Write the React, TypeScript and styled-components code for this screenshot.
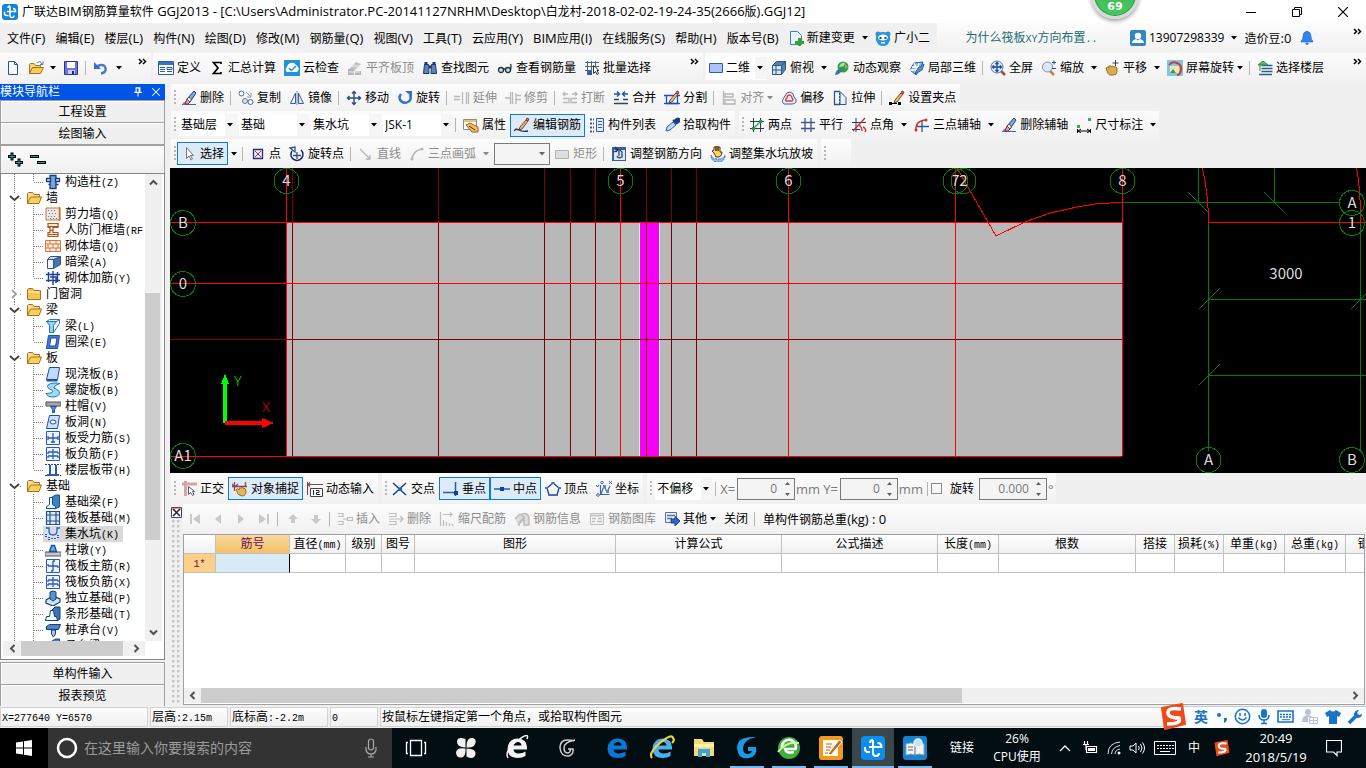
import React, { ReactNode } from 'react';
import styled, { createGlobalStyle, css } from 'styled-components';

const uiFont = '"Open Sans", "Noto Sans CJK SC", sans-serif';

const GlobalStyle = createGlobalStyle`
  *, *::before, *::after { box-sizing: border-box; }
  html, body { margin: 0; height: 100%; }
  body { font: 12px/16px ${uiFont}; color: #000; background: #f0f0f0; overflow: hidden; }
  button, input, select { font: inherit; color: inherit; margin: 0; padding: 0; border: 0; background: none; border-radius: 0; }
  svg { display: block; flex: none; }
`;

/* ---------- icons ---------- */

const S = ({ d, c = '#000', w = 1, f = 'none' }: { d: string; c?: string; w?: number; f?: string }) => (
  <path d={d} stroke={c} strokeWidth={w} fill={f} />
);

const eraser = (
  <>
    <S d="M1 14.5h14" c="#3d6c9c" />
    <S d="M2 14q3-1 5-3" c="#5b8dc0" w={2} />
    <S d="M6 9l3 3-2 2H4z" c="#7b2d3c" f="#e8a0a8" />
    <S d="M6 9l7-8 2 2-6 9z" c="#1f3f78" f="#7fa8df" />
    <S d="M6 9l3 3 1.500-2-2.500-3z" c="#553" f="#f5f5f5" />
  </>
);
const pencil = (
  <>
    <S d="M6 10l6-7 2 1-6 8-3 1z" c="#6b4a22" f="#e9bd7c" />
    <S d="M12 3l1-2 2 1-1 2z" c="#a33" f="#d66" />
  </>
);
const folder = (
  <>
    <S d="M1.500 13.500v-10l1-1h4l1.500 2h5.500v3" c="#a3741c" f="#f9dc85" />
    <S d="M1.500 13.500l3-6.500h11l-2.500 6.500z" c="#a3741c" f="#fbd05f" />
  </>
);
const blueBox = <path d="M1.500 1.500h13v13h-13z" fill="#eef5ff" stroke="#2a5bb8" />;
const bigE = (c: string) => (
  <path d="M23 14.500H9.500q.5 4 5 4 4 0 7-2v4.500q-3 2-8 2Q4 23 3.500 14 4 4 13.500 3.500 23 4 23 12zM9.500 10.500h8q-.3-3.500-3.800-3.500T9.500 10.500z" fill={c} fillRule="evenodd" />
);

const glyphs: Record<string, ReactNode> = {
  app: (<><rect width="16" height="16" rx="3" fill="#1585d8" /><S d="M8 2v9.500q0 2 2 2t2-2M2.500 7.500v2q0 2 2 2h2M5 7.500h8.500q0-3-2.500-3M8 2q-2 0-2 2" c="#fff" w={1.500} /></>),
  newFile: <S d="M3.500 1.500h6l3 3v10h-9z M9.500 1.500v3h3" c="#35507c" f="#f5f9ff" />,
  open: (<><S d="M1.500 13.500v-9l1-1h3.500l1.500 2h5v2" c="#a3741c" f="#f6d47a" /><S d="M1.500 13.500l3-6h11l-3 6z" c="#a3741c" f="#f9cd57" /><S d="M9 3q3-3 5 1M15 1.500v3h-3" c="#5d7896" /></>),
  save: (<><S d="M1.500 1.500h13v13h-13z" c="#2c2f9e" f="#6f74da" /><path d="M4 2h8v6H4z" fill="#fff" /><path d="M5 10h7v4H5z" fill="#c9ccf3" /><path d="M9 11h2v3H9z" fill="#22256e" /></>),
  undoFull: (<><S d="M8 13.500q5.500-1 4.500-5.500t-8-2" c="#4a79cf" w={2.500} /><path d="M1 2v7h7z" fill="#3c6cc4" /></>),
  define: (<><S d="M.5 1.500h15v13H.5z" c="#2f5cb0" f="#fff" /><path d="M1 2h14v3H1z" fill="#3e6ec7" /><S d="M2 7.500h5M2 9.500h5M2 11.500h5M9 7.500h5v2H9zM9 11.500h5" c="#2f5cb0" /></>),
  sigma: <S d="M12 4V2.500H4.500L9 8l-4.500 5.500H12V12" w={1.700} />,
  cloudCheck: (<><rect width="16" height="16" fill="#2293d8" /><path d="M3 12a3 3 0 0 1 0-5 5 5 0 0 1 9-2 4 4 0 0 1 1 7z" fill="#fff" /><S d="M5 8l2.500 2.500L12 6" c="#2293d8" w={1.500} /></>),
  levelTop: (<><path d="M2 9l7-7 5 2-7 7z" fill="#c4c4c4" /><path d="M1 9h6v6H1z M8 11h6v4H8z" fill="#b5b5b5" /><S d="M4 6h10M2 12h11" c="#eee" /></>),
  find: (<><S d="M2.500 4.500h4l.5 9H1.500z M9.500 4.500h4l1 9H9z" c="#1c3766" f="#5d83bd" /><S d="M4 2v3M12 2v3M7 7h2" c="#1c3766" w={3} /></>),
  glasses: (<><circle cx="4" cy="10" r="2.500" fill="#cfe0f5" stroke="#233" strokeWidth="1.300" /><circle cx="11" cy="10" r="2.500" fill="#cfe0f5" stroke="#233" strokeWidth="1.300" /><S d="M6.500 9h2M13.500 10q1-4 0-6" c="#233" w={1.300} /></>),
  batch: (<><S d="M1 2.500h14M1 6.500h14M3.500 1v14M7.500 1v9M11.500 1v6M1 10.500h7" c="#50648a" /><path d="M4 11h4v4H4z" fill="#2f5cb0" /><S d="M9.500 5.500v8l2-2 1.500 3 1.500-1-1.500-3h2z" c="#333" f="#fff" /></>),
  plan: <S d="M1.500 3.500h13v9h-13z" c="#2f5cb0" f="#a9c4f5" />,
  cube: (<><S d="M1.500 5.500l4-4h9v8l-4 5h-9z" c="#31567f" f="#4f81b3" /><path d="M2 6h8v8H2z" fill="#d6e6f5" /><S d="M1.500 5.500h9v9M10.500 5.500l4-4M5 6v8M2 10h8" c="#31567f" /></>),
  orbit: (<><circle cx="9" cy="7" r="5.500" fill="#2f9e4b" /><path d="M5 7q2-5 6-4 0 4-6 4z" fill="#a6e5a5" /><path d="M1 15q1-6 5-6 3 1 0 4-2 2-5 2z" fill="#3a72b8" /><path d="M11 4l3 3-3 2z" fill="#c94" /></>),
  local3d: (<><S d="M1 10l4-7 9-1-3 7-4 6z" c="#2a5f9b" f="#8fb7dc" /><S d="M5 3l3 7M10 3l-2 7M1 10h8M3 7l8 1" c="#fff" w={1.300} /><S d="M6 14l3-6 6-4-2 6z" c="#2a5f9b" f="#5d93c7" /></>),
  fullView: (<><S d="M11 11l4 4" c="#8c5a3c" w={2.500} /><circle cx="7" cy="7" r="6" fill="#dbe9fa" stroke="#5f7899" /><S d="M7 2.500v9M2.500 7h9M5.500 4L7 2.500 8.500 4M5.500 10L7 11.500 8.500 10M4 5.500L2.500 7 4 8.500M10 5.500L11.500 7 10 8.500" c="#1c4a96" w={1.300} /></>),
  zoomer: (<><S d="M9 11l4 4" c="#b98748" w={2.500} /><circle cx="6.500" cy="7" r="5" fill="#dbe9fa" stroke="#7e93ab" /><S d="M11 2.500h4M13 .5v4M11 8.500h4" c="#2a4f88" /></>),
  pan: (<><path d="M2 8q2-2 3 0V6q2-1 2 1 2-2 3 0 2-1 3 1v4q0 3-4 3H6q-2 0-4-7z" fill="#dcab55" stroke="#9a7022" /><S d="M11.500 0v6M8.500 3h6" c="#345" /></>),
  screenRotate: (<><rect width="16" height="16" fill="#7cc9e8" /><rect x="3" y="6" width="9" height="7" fill="#f6e7a8" /><path d="M3 13l3-4 3 4z" fill="#3c9b49" /><S d="M2 5q3-4 8-2t4 7-4 5" c="#d63a35" w={2} /></>),
  floors: (<><S d="M4.500 5.500h11M4.500 8.500h11M4.500 11.500h11M2 14.500h13" c="#2a5e91" w={1.500} /><S d="M1 5l5-4 5 4zM3 5v6" c="#2b8a4a" f="#69b870" /></>),
  erase: eraser,
  copy: (<><circle cx="3.500" cy="3.500" r="2.500" fill="#fff" stroke="#4c6b90" /><circle cx="7" cy="11" r="2.500" fill="#dde" stroke="#667c96" /><circle cx="12.500" cy="12" r="2.500" fill="#fff" stroke="#4c6b90" /><S d="M8 2l5 5M13 3v4H9" c="#8a99ac" /></>),
  mirror: (<><S d="M1.500 13.500L6.500 3v10.500z" c="#3c5f93" /><S d="M14.500 13.500L9.500 3v10.500z" c="#3c5f93" f="#dfe8f5" /><S d="M8 1v14" c="#88a" /></>),
  move: <S d="M8 1.500v13M1.500 8h13M6 3.500l2-2 2 2M6 12.500l2 2 2-2M3.500 6l-2 2 2 2M12.500 6l2 2-2 2" c="#2b4c80" w={1.400} />,
  rotate: (<><S d="M4 4q-3 4 0 7t7 1 2-7" c="#3d6fcd" w={2.500} /><path d="M8 1h7v6z" fill="#3d6fcd" /></>),
  extend: <S d="M0 6.500h6M0 9.500h6M8.500 2v12M12.500 2v12M14.500 2v12" c="#b9b9b9" w={1.300} />,
  trim: <S d="M0 8h5M5.500 2v12M7.500 2v12M11 5.500h5M11 9.500h5M11 3v11" c="#b9b9b9" w={1.300} />,
  breakIt: <S d="M1 4h5M10 4h5M3 2L1 4l2 2M13 2l2 2-2 2M1 8.500h6v4H1M15 8.500H9v4h6" c="#b9b9b9" w={1.300} />,
  join: (<><S d="M1 4h5M15 4h-5M4 1.500L6.500 4 4 6.500M12 1.500L9.500 4 12 6.500" c="#2655a8" w={1.500} /><S d="M1 9.500h5M10 9.500h5M1 13.500h14" c="#345" w={1.500} /></>),
  split: (<><S d="M0 5.500h16M2.500 5.500v8h11v-8" c="#1f46d6" w={1.300} />{pencil}<S d="M0 13.500h16" c="#1f46d6" w={1.300} /></>),
  align: <S d="M2.500 1v14M4 4h8v3H4zM4 10h10v4H4z" c="#b5b5b5" w={1.300} />,
  offset: (<><S d="M3 14q-3-2-1-5 1-1 2-3 1-4 5-4 4 1 4 5 3 3 2 5-1 2-4 2z" c="#3f5f86" f="#e8eef6" /><S d="M5 11q-1-2 1-3 0-3 3-3 2 1 2 3 2 2 0 3z" c="#d23c3c" w={1.300} /></>),
  stretch: (<><S d="M8 1.500H2.500v13H8" c="#2d568d" w={1.300} /><S d="M8 1.500l6 6v7H8z" c="#2d568d" f="#e6effa" /><path d="M7.500 3v11" stroke="#2d568d" strokeDasharray="2 1" /></>),
  grip: (<>{pencil}<path d="M0 12h3v3H0zM9 12h3v3H9z" /><S d="M2 13.500h6" /></>),
  property: (<><S d="M.5 2.500h13v10H.5z" c="#7a8ca5" f="#fff" /><path d="M1 3h12v2H1z" fill="#f0c36a" /><path d="M3 8l4-2 8 4v5H9z" fill="#f7b955" stroke="#9a6a1c" /><S d="M6 9l6 4" c="#333" /></>),
  editBar: (<>{pencil}<S d="M0 14q2-3 5-1t9 1" c="#1d2f55" w={1.300} /></>),
  list: (<><path d="M1 2.500h4M1 6.500h4M1 10.500h4M1 14.500h4" stroke="#3a5f95" strokeWidth="2" strokeDasharray="2 1" /><S d="M7.500 1.500h7v13h-7z" c="#3a5f95" f="#dfeafa" /><S d="M9 4.500h4M9 7.500h4M9 10.500h4" c="#3a5f95" /></>),
  picker: (<><S d="M2 14l1-4 6-5 3 3-6 5z" c="#2768a8" f="#b5dcf8" /><S d="M9 3l4 4M10 5q3-5 5-3t-2 4" c="#1b3d86" w={2} f="#1b3d86" /></>),
  twoPoint: (<><S d="M4.500 1v14M11.500 1v14M1 4.500h14M1 11.500h14" c="#233c66" /><S d="M3 13L13 3" c="#2f9a3c" w={1.300} /><path d="M10 3h3v3h-3zM3 10h3v3H3z" fill="#2f9a3c" /></>),
  parallel: <S d="M5 1v14M11 1v14M1 5.500h14M1 11.500h14" c="#41588b" w={1.300} />,
  pointAngle: (<><S d="M5 1v14M1 5.500h14M1 12.500h8" c="#233c66" /><S d="M2 14L14 1M8 8q3 2 3 6M12 10q4 2 2 5" c="#d0332e" w={1.400} /></>),
  threeAxis: (<><S d="M8 3v12M3 9.500h12" c="#2d568d" w={1.300} /><S d="M2 14q-1-10 9-11" c="#d0332e" w={1.500} /><circle cx="12" cy="3" r="1.500" fill="#d0332e" /><circle cx="2" cy="13" r="1.500" fill="#d0332e" /></>),
  dimension: (<><path d="M1 8h3v3H1zM12 1h3v3h-3z" fill="#43a852" /><S d="M1.500 12v4M14.500 12v4M2 14h12M5 12l-3 2 3 2M11 12l3 2-3 2" w={1} /></>),
  cursor: <S d="M5.500 1.500v11l2.500-2.500 2 4 1.500-1-2-3.500h3z" c="#777" f="#fff" />,
  point: (<><S d="M3.500 3.500h9v9h-9z" c="#1f2f86" f="#eef" w={1.300} /><S d="M5 5l6 6M11 5l-6 6" c="#c22c2c" /></>),
  rotatePoint: (<><S d="M3 5a6 6 0 1 0 9-1" c="#1c2b55" w={1.500} /><S d="M1 2l5-1v5zM4 9.500h8M8 6v7" c="#2a4f94" w={1.300} /></>),
  line: (<><S d="M2 3l10 10" c="#b5b5b5" w={1.300} /><S d="M12 9v4H8" c="#b5b5b5" w={1.300} /></>),
  arc: (<><S d="M3 14q0-9 10-11" c="#b5b5b5" w={1.500} /><circle cx="13" cy="3" r="1.500" fill="#b5b5b5" /><circle cx="3" cy="13" r="1.500" fill="#b5b5b5" /></>),
  rect: <S d="M1.500 4.500h13v8h-13z" c="#b0b0b0" f="#ddd" />,
  adjustDir: (<><path d="M1 1h14v14H1z" fill="#3c5f9b" /><path d="M3 4h11v10H3z" fill="#dce8f8" /><S d="M5 6q3-4 6 0v5q-4 2-5-1M8 5v5M4 1l3 3-4 2" c="#1c3565" w={1.200} /></>),
  slope: (<><path d="M4 7l-2-2 2-1V1h2v4V0h2v5V1h2v5h2q0 4-3 5H6z" fill="#ffd75c" stroke="#4a3b14" /><path d="M1 9q1 4 7 4t7-4q0 7-7 7T1 9z" fill="#8cbbe8" stroke="#4171a8" strokeDasharray="2 1" /></>),
  ortho: (<><path d="M1 3h15M4.500 0v15" stroke="#d9a3a3" strokeWidth="3" /><S d="M7.500 5.500v8l2-2 2 3 1.500-1-1.500-3h2z" c="#557" f="#fff" /></>),
  osnap: (<><S d="M0 5.500h15M2.500 1v9M13.500 1v5M0 3l3 3 3-3" c="#8e4545" w={1.300} /><path d="M4 9q2-3 3 0 0-3 2-2 1-1 2 0 3 0 3 3 0 5-4 5-4 0-6-6z" fill="#e6b65e" stroke="#9a7022" /></>),
  dynInput: (<><S d="M.5 1v13M0 3.500h16M3 1.500L1 3.500l2 2" c="#8e4545" w={1.200} /><S d="M3.500 7.500h12v8h-12z" c="#444" f="#fff" /><S d="M6.500 9v5M9 9.500h3v2H9.500v2H13" c="#222" /></>),
  cross: (<><S d="M1 2l13 12M14 2L1 14" c="#1f3f8f" w={1.500} /><path d="M6 6.500h4v3.500H6z" fill="#1668c8" /></>),
  perp: (<><S d="M0 11.500h15M12.500 1v14" c="#1f5fb5" w={1.500} /><path d="M11 10h4v4h-4z" fill="#123f93" /></>),
  mid: (<><S d="M0 8h16" c="#1f5fb5" w={1.500} /><path d="M6 6h4v4H6z" fill="#123f93" /></>),
  vertex: (<><S d="M8 2l6 5-2 7H4L2 7z" c="#1c3f8f" w={1.300} /><path d="M6.500 1h3v2h-3zM0 6h3v2H0zM13 6h3v2h-3zM3 13h2v2H3zM11 13h2v2h-2z" fill="#3b74c9" /></>),
  coord: (<><S d="M4.500 4v9.500h9M5 13l3-8 3 6 3-6" c="#3c62a8" w={1.200} /><path d="M7 4h3v3H7zM10 9h3v3h-3z" fill="#5f87c6" /><circle cx="2" cy="14" r="1.300" fill="#fff" stroke="#3c62a8" /><circle cx="6" cy="1.500" r="1.300" fill="#fff" stroke="#3c62a8" /><S d="M0 4l1.500 2L3 4M13 0l3 3M16 0l-3 3" c="#3c62a8" /></>),
  first: <path d="M3 3h2v10H3zM13 3v10L6 8z" fill="#c9c9c9" />,
  prev: <path d="M11 3v10L5 8z" fill="#c9c9c9" />,
  next: <path d="M5 3v10l6-5z" fill="#c9c9c9" />,
  last: <path d="M11 3h2v10h-2zM3 3v10l7-5z" fill="#c9c9c9" />,
  up: <path d="M8 3l5 5h-3v4H6V8H3z" fill="#c9c9c9" />,
  down: <path d="M8 13l5-5h-3V4H6v4H3z" fill="#c9c9c9" />,
  insert: <S d="M1 2.500h5v3H1M1 10.500h5v3H1M6 8h4M10.500 6.500h5v3h-5z" c="#bdbdbd" w={1.200} />,
  removeRow: <S d="M1 2.500h7v3H1M1 10.500h7v3H1M1 8h14M12 5l3 3-3 3" c="#bdbdbd" w={1.200} />,
  scale: <S d="M1.500 1v14M4 3.500h9M11 1.500l2 2-2 2M4.500 15V9M7.500 15v-4M10.500 15v-3M13.500 15v-2" c="#bdbdbd" w={1.200} />,
  info: <S d="M1 8l5-5 4 3-5 6v3M8 3q5-2 7 3v8h-5V8l-6 6" c="#bdbdbd" w={1.500} f="#ddd" />,
  gallery: (<><S d="M1.500 2.500h13v11h-13z" c="#bdbdbd" /><S d="M1 4.500h14M3 7.500h4M9 7.500h4M3 10.500h3M8 10.500h5" c="#bdbdbd" w={1.300} /></>),
  other: (<><S d="M1.500 1.500h11v10h-11z" c="#5270a0" f="#eef3fb" /><S d="M3 4.500h8M3 7.500h5" c="#5270a0" w={1.500} /><path d="M7 8h4V5.500L16 10l-5 5v-3H7z" fill="#2b65d0" stroke="#173f8d" /></>),
  change: (<><S d="M2.500 1.500h7l4 4v9h-11z" c="#3d7fc0" f="#e9f4ff" /><path d="M10 8h3v3h3v3h-3v2h-3v-2H7v-3h3z" fill="#32a52c" /></>),
  mascot: (<><circle cx="3" cy="4" r="2.500" fill="#2796dd" /><circle cx="13" cy="4" r="2.500" fill="#2796dd" /><path d="M1 7q1-5 7-5t7 5q1 3-1 5-1 4-6 4t-6-4Q0 10 1 7z" fill="#2796dd" /><ellipse cx="8" cy="7.500" rx="5" ry="3" fill="#fff" /><path d="M4.500 7h2v2h-2zM9.500 7h2v2h-2z" fill="#134c86" /><path d="M6 12h4v1.500H6z" fill="#fff" /></>),
  user: (<><rect width="16" height="16" rx="2" fill="#3387c0" /><circle cx="8" cy="6" r="3.200" fill="#fff" /><path d="M2 13q0-3 4-4l2 1.500L10 9q4 1 4 4z" fill="#fff" /></>),
  bell: <path d="M8 1q4 1 4 5 0 4 2 5v1H2v-1q2-1 2-5 0-4 4-5zM6.500 13h3L8 15z" fill="#2f86f0" stroke="#2456a5" strokeWidth=".5" />,
  folder,
  folderShut: (<><S d="M1.500 13.500v-10l1-1h4l1.500 2h6.500v9z" c="#a3741c" f="#f3c552" /><S d="M2 6h12" c="#fdeeb0" /></>),
  column: (<><S d="M5 1.500h6v13H5z" c="#1c3f7a" f="#7aa5e2" w={1.300} /><S d="M1.500 4.500h4v3h-4zM10.500 4.500h4v3h-4zM3.500 10.500h2M10.500 10.500h3" c="#1c3f7a" w={1.300} f="#dce9fb" /></>),
  shearWall: (<><path d="M1 2h14v12H1z" fill="#e8e8e8" stroke="#c0763a" /><path d="M3 4.500h9M4 7.500h9M3 10.500h9M5 12.500h8" stroke="#777" strokeDasharray="1 2" /><S d="M14.500 1v14" c="#d66a20" w={1.500} /></>),
  doorWall: <S d="M3 1.500h10v4H8v5h5v4H3v-4h2v-5H3zM3 4.500h10M5 8.500h3M3 12.500h10" c="#b2541b" f="#ffe9d6" w={1.200} />,
  brickWall: <S d="M.5 2.500h15v11H.5zM0 6h16M0 10h16M5 2v4M11 2v4M8 6v4M3 6v4M13 6v4M5 10v4M11 10v4" c="#d2763e" f="#fff0e4" />,
  beam: (<><S d="M2.500 5.500l3-3h10l-3 4z" c="#37527e" f="#c9d9ee" /><S d="M2.500 5.500h6v9h-6z" c="#37527e" f="#eef5ff" /><S d="M8.500 5.500l7-3v8l-7 4z" c="#37527e" f="#4a72ad" /></>),
  wallBar: <S d="M1 4.500h14M3.500 2v10M12.500 2v10M1 10.500h14M8 1v14M5 7h6v6" c="#1a4296" w={1.400} />,
  beamL: (<><S d="M1.500 3.500l3-2h10l-3 2z" c="#2a78b8" f="#d5f0ff" /><S d="M1.500 3.500h10l-3 4v7h-4v-7z" c="#2a78b8" f="#8fd1f4" /><S d="M14.500 1.500v4l-6 9" c="#2a78b8" /></>),
  ring: (<><S d="M3.500 1.500h11l-2 13h-11z" c="#1d4da8" f="#4779cc" /><path d="M6 4h6l-1.500 8H4.500z" fill="#fff" stroke="#1d4da8" /></>),
  slab: (<><S d="M4.500 1.500h10l-2 12h-11z" c="#1d4da8" f="#c0dbfa" /><S d="M1.500 14.500h11" c="#1d4da8" w={2} /></>),
  spiral: <S d="M15 1.500Q7 0 3 3q-2 3 4 5 2 2-1 3l-5 .5q2 4 8 3.500 6-1 5.500-5Q14 8 9 6q-1-2 6-4.500z" c="#1f79b8" f="#9ddbf8" />,
  cap: (<><path d="M1 4h15v4H1z" fill="#a5a5a5" stroke="#555" /><S d="M5.500 8.500h6l-2 3v3h-2v-3z" c="#1d4da8" f="#5b8be0" /></>),
  hole: (<><S d="M4.500 1.500h10l-2 13h-11z" c="#1d4da8" f="#cfe2fb" /><ellipse cx="8" cy="8" rx="3" ry="2" fill="#fff" stroke="#1d4da8" /></>),
  barSlab: (<>{blueBox}<S d="M3 8h10M8 3v10M3 6v4M13 6v4M6 12h4" c="#2a5bb8" w={1.300} /></>),
  barNeg: (<>{blueBox}<S d="M3 6h10M3 10h10M8 3v10M3 6v2M13 6v2M3 10v2M13 10v2" c="#2a5bb8" w={1.300} /></>),
  barMain: (<>{blueBox}<S d="M8 3v10M3 8h10M3 8v-2M13 8v2M8 3h2M6 13h2" c="#2a5bb8" w={1.300} /></>),
  band: (<><path d="M0 2.500h16M0 13.500h16" stroke="#1a4296" strokeDasharray="2 1" /><S d="M5 3v10M11 3v10M2 13h12" c="#2a5bb8" w={2} /></>),
  fBeam: (<><S d="M5.500 10V4l5-3h4v12l-5 2" c="#194f8c" f="#3d83c0" /><S d="M1.500 14.500v-2l3-2v-7h3v7l3 2v2z" c="#194f8c" f="#e5f3ff" /></>),
  raft: <S d="M1.500 1.500h13v13h-13zM1 5h14M1 11h14M5 1v14M11 1v14" c="#20508c" f="#dcebfa" w={1.200} />,
  pit: (<><path d="M1 2h3q1 7 4 7t4-7h3v8q-3 4-7 4t-7-4z" fill="#d5e6fb" /><path d="M1 8v4M4 11v3M7 12v2M10 12v2M13 9v3" stroke="#2a5bb8" strokeWidth="2" strokeDasharray="1 1" /><S d="M1 2h3v3q0 4 4 4t4-4V2h3" c="#2a5bb8" w={1.300} /></>),
  pier: (<><path d="M0 10h16v4H0z" fill="#c8c8c8" stroke="#555" /><S d="M4.500 9.500l2-6h3l2 6z" c="#194f9c" f="#6fa5e8" w={1.300} /></>),
  padF: (<><S d="M1 10l7-4 7 3v3l-7 4-7-3z" c="#123f7a" f="#cfe3f7" w={1.200} /><S d="M5 9V2l3-1 3 1v7l-3 2z" c="#123f7a" f="#5d93cf" /></>),
  stripF: (<><S d="M7 4l3-3h5v12l-3 2z" c="#123f7a" f="#3d73b0" /><S d="M.5 14.500l1-4h3l1-6h3l1 6h2l1 4z" c="#123f7a" f="#f3f9ff" /></>),
  pile: (<><S d="M1.500 4.500l3-2h11l-2 5h-12z" c="#123f7a" f="#4e86c4" /><S d="M6.500 8h4v4l-2 3-2-3z" c="#123f7a" f="#a9cdf0" /></>),
  pin: <S d="M5 2.500h6M5.500 2v6M9.500 2v6M10.500 2v6M3 8.500h10M8 9v5" c="#fff" w={1.400} />,
  closeW: <S d="M3 3l10 10M13 3L3 13" c="#fff" w={1.400} />,
};

const Icon = ({ name, size = 16 }: { name: string; size?: number }) => (
  <svg width={size} height={size} viewBox="0 0 16 16" aria-hidden="true">{glyphs[name]}</svg>
);

const Triangle = ({ color = '#000' }: { color?: string }) => (
  <svg width="6" height="4" viewBox="0 0 6 4" aria-hidden="true"><path d="M0 0h6L3 3.500z" fill={color} /></svg>
);

const More = styled.button`
  margin-left: auto;
  align-self: flex-start;
  width: 18px;
  height: 18px;
  display: grid;
  place-items: center;
`;
const MoreMark = () => (
  <More aria-label="更多">
    <svg width="9" height="8" viewBox="0 0 9 8"><path d="M1 1l2.500 2.500L1 6M5 1l2.500 2.500L5 6" fill="none" stroke="#000" strokeWidth="1.500" /></svg>
  </More>
);

/* ---------- mixed Chinese and Latin text ---------- */

const HalfWidth = styled.span`
  font: 10px/14px "Liberation Mono", monospace;
`;
const Latin = styled.span`
  font-size: 13px;
`;
const splitScripts = (text: string, Run: React.ElementType) =>
  text.split(/([\x20-\x7e]+)/).filter(Boolean).map((part, i) =>
    /^[\x20-\x7e]/.test(part) ? <Run key={i}>{part}</Run> : part);
const Song = ({ children }: { children: string }) => <span>{splitScripts(children, HalfWidth)}</span>;
const Mixed = ({ children }: { children: string }) => <span>{splitScripts(children, Latin)}</span>;

/* ---------- toolbar parts ---------- */

const Page = styled.div`
  display: flex;
  flex-direction: column;
  height: 100vh;
  background: #f0f0f0;
  position: relative;
`;

const Strip = styled.div<{ $h: number }>`
  display: flex;
  flex: none;
  gap: 4px;
  height: ${(p) => p.$h}px;
  padding: 0 1px;
  white-space: nowrap;
  overflow: hidden;
`;

const Panel = styled.div`
  display: flex;
  align-items: center;
  background: linear-gradient(#fcfcfc, #f1f1f1);
  min-width: 0;
`;

const Grip = styled.span`
  flex: none;
  width: 6px;
  height: 16px;
  background: repeating-linear-gradient(#b8b8b8 0 2px, transparent 2px 4px) 3px 0 / 2px 100% no-repeat;
`;

const Divider = styled.span`
  flex: none;
  width: 6px;
  height: 14px;
  background: linear-gradient(#b4b4b4, #b4b4b4) 2px 0 / 1px 100% no-repeat;
`;

const Tool = styled.button<{ $on?: boolean; $w?: number }>`
  display: flex;
  align-items: center;
  justify-content: center;
  flex: none;
  gap: 3px;
  height: 23px;
  width: ${(p) => (p.$w ? `${p.$w}px` : 'auto')};
  padding: ${(p) => (p.$w ? 0 : '0 4px')};
  white-space: nowrap;
  &:disabled { color: #8d8d8d; }
  ${(p) => p.$on && css`
    background: #dcebf7;
    box-shadow: inset 0 0 0 1px #0a7bd6;
  `}
`;

type ToolSpec = { i?: string; t?: string; on?: boolean; off?: boolean; drop?: boolean; menu?: boolean };
const Tools = ({ items }: { items: (ToolSpec | '|')[] }) => (
  <>
    {items.map((it, k) => it === '|' ? <Divider key={k} /> : (
      <React.Fragment key={k}>
        <Tool $on={it.on} disabled={it.off}>
          {it.i && <Icon name={it.i} />}
          {it.t}
          {it.menu && <Triangle color={it.off ? '#888' : '#000'} />}
        </Tool>
        {it.drop && <Tool $w={12} disabled={it.off} aria-label={`${it.t ?? ''}选项`}><Triangle color={it.off ? '#888' : '#000'} /></Tool>}
      </React.Fragment>
    ))}
  </>
);

const Combo = styled.label<{ $w: number; $framed?: boolean }>`
  flex: none;
  display: grid;
  grid-template-columns: 1fr 14px;
  align-items: center;
  width: ${(p) => p.$w}px;
  height: 22px;
  margin-left: 2px;
  background: linear-gradient(90deg, #fff 0 calc(100% - 12px), #f5f5f5 calc(100% - 12px));
  ${(p) => p.$framed && css`background: #f4f4f4; border: 1px solid #7a7a7a;`}
  > select {
    grid-area: 1 / 1 / 2 / 3;
    appearance: none;
    width: 100%;
    height: 20px;
    padding-left: 2px;
    line-height: 20px;
  }
  > svg { grid-area: 1 / 2 / 2 / 3; justify-self: center; pointer-events: none; }
`;
const Dropdown = ({ label, value, w, framed }: { label: string; value: string; w: number; framed?: boolean }) => (
  <Combo $w={w} $framed={framed}>
    <select aria-label={label} disabled={framed}><option>{value}</option></select>
    <Triangle color={framed ? '#666' : '#000'} />
  </Combo>
);

/* ---------- title and menu ---------- */

const TitleBar = styled.header`
  display: flex;
  align-items: center;
  flex: none;
  height: 23px;
  padding: 0 2px;
  gap: 4px;
  background: #fff;
  white-space: nowrap;
`;
const Title = styled.h1`
  flex: 1;
  margin: 0;
  font: 12px/20px ${uiFont};
`;
const WindowButton = styled.button`
  width: 42px;
  height: 20px;
  display: grid;
  place-items: center;
`;

const MenuBar = styled.nav`
  display: grid;
  grid-template-columns: 937px 188px minmax(0, 1fr);
  flex: none;
  height: 30px;
  white-space: nowrap;
`;
const MenuGroup = styled.div`
  display: flex;
  align-items: center;
  justify-content: space-between;
  padding: 0 3px 0 2px;
`;
const MenuItem = styled.button`
  padding: 0 5px;
  height: 22px;
`;
const MenuCluster = styled.div`
  display: flex;
`;
const MenuPanel = styled(Panel)`
  padding: 0 0 0 1px;
`;
const NewsLink = styled.a`
  margin: 0 auto;
  color: #1b6d70;
  text-decoration: none;
`;

const CommandBar = styled.div`
  display: grid;
  grid-template-columns: 151px 550px minmax(0, 1fr);
  gap: 2px;
  flex: none;
  height: 31px;
  white-space: nowrap;
`;
const CommandPanel = styled(Panel)`
  padding-left: 1px;
  height: 29px;
`;
const ViewPick = styled.div`
  display: flex;
  align-items: center;
  width: 61px;
  height: 24px;
  padding-left: 2px;
  background: #fff;
  > label { width: 43px; margin: 0; }
`;

/* ---------- side navigation ---------- */

const Body = styled.div`
  display: flex;
  flex: 1;
  min-height: 0;
`;
const Side = styled.aside`
  flex: none;
  display: flex;
  flex-direction: column;
  width: 165px;
  margin-right: 5px;
  white-space: nowrap;
`;
const SideHead = styled.div`
  display: flex;
  align-items: center;
  height: 16px;
  line-height: 16px;
  color: #fff;
  background: #0055e5;
  > span { flex: 1; }
  > button { height: 16px; width: 18px; display: grid; place-items: center; }
`;
const SideTab = styled.button`
  flex: none;
  height: 22px;
  border: 1px solid #a0a0a0;
  border-width: 1px 1px 0 1px;
  box-shadow: inset 1px 1px 0 #fff;
  background: #f0f0f0;
`;
const SideTools = styled.div`
  flex: none;
  display: flex;
  gap: 6px;
  align-items: center;
  height: 29px;
  padding-left: 6px;
  border: 1px solid #a0a0a0;
  border-width: 2px 1px 0 1px;
  background: linear-gradient(#fcfcfc, #efefef);
`;
const TreeFrame = styled.div`
  flex: 1;
  min-height: 0;
  display: grid;
  grid-template: minmax(0, 1fr) 17px / minmax(0, 1fr) 17px;
  margin-bottom: 2px;
  padding: 0 2px 1px 2px;
  border: 1px solid #868686;
  background: #fff;
`;
const Tree = styled.ul`
  margin: 0;
  padding: 0;
  list-style: none;
  overflow: hidden;
`;
const Node = styled.li<{ $leaf: boolean; $sel?: boolean }>`
  display: flex;
  align-items: center;
  gap: ${(p) => (p.$leaf ? 0 : 4)}px;
  height: 16px;
  padding-left: 5px;
  > button {
    display: flex;
    align-items: center;
    gap: 4px;
    height: 16px;
    line-height: 16px;
    padding-right: 4px;
    padding-left: ${(p) => (p.$leaf ? 2 : 0)}px;
    background: ${(p) => (p.$sel ? '#d9d9d9' : 'none')};
  }
`;
const Twig = styled.svg`
  margin-right: -1px;
`;

const VBar = styled.div`
  display: grid;
  grid-template-rows: 17px 102px 247px 1fr 17px;
  background: #f0f0f0;
  > i { grid-row: 3; background: #cdcdcd; margin-right: 2px; }
  > button { display: grid; place-items: center; }
`;
const HBar = styled.div<{ $cols: string }>`
  display: grid;
  grid-template-columns: ${(p) => p.$cols};
  height: 15px;
  background: #f0f0f0;
  > i { background: #cdcdcd; }
  > button { display: grid; place-items: center; }
`;
const Chevron = ({ d }: { d: string }) => (
  <svg width="9" height="9" viewBox="0 0 9 9" aria-hidden="true"><path d={d} fill="none" stroke="#505050" strokeWidth="2" /></svg>
);
const CH = { l: 'M6.500 1L3 4.500 6.500 8', r: 'M2.500 1L6 4.500 2.500 8', u: 'M1 6.500L4.500 3 8 6.500', d: 'M1 2.500L4.500 6 8 2.500' };

const nodes: { t: string; i: string; g?: 'open' | 'shut'; last?: boolean; sel?: boolean }[] = [
  { t: '构造柱(Z)', i: 'column', last: true },
  { t: '墙', i: 'folder', g: 'open' },
  { t: '剪力墙(Q)', i: 'shearWall' },
  { t: '人防门框墙(RF', i: 'doorWall' },
  { t: '砌体墙(Q)', i: 'brickWall' },
  { t: '暗梁(A)', i: 'beam' },
  { t: '砌体加筋(Y)', i: 'wallBar', last: true },
  { t: '门窗洞', i: 'folderShut', g: 'shut' },
  { t: '梁', i: 'folder', g: 'open' },
  { t: '梁(L)', i: 'beamL' },
  { t: '圈梁(E)', i: 'ring', last: true },
  { t: '板', i: 'folder', g: 'open' },
  { t: '现浇板(B)', i: 'slab' },
  { t: '螺旋板(B)', i: 'spiral' },
  { t: '柱帽(V)', i: 'cap' },
  { t: '板洞(N)', i: 'hole' },
  { t: '板受力筋(S)', i: 'barSlab' },
  { t: '板负筋(F)', i: 'barNeg' },
  { t: '楼层板带(H)', i: 'band', last: true },
  { t: '基础', i: 'folder', g: 'open' },
  { t: '基础梁(F)', i: 'fBeam' },
  { t: '筏板基础(M)', i: 'raft' },
  { t: '集水坑(K)', i: 'pit', sel: true },
  { t: '柱墩(Y)', i: 'pier' },
  { t: '筏板主筋(R)', i: 'barMain' },
  { t: '筏板负筋(X)', i: 'barNeg' },
  { t: '独立基础(P)', i: 'padF' },
  { t: '条形基础(T)', i: 'stripF' },
  { t: '桩承台(V)', i: 'pile' },
  { t: '承台梁(F)', i: 'fBeam' },
];

const TreeNode = ({ n }: { n: (typeof nodes)[number] }) => (
  <Node $leaf={!n.g} $sel={n.sel}>
    {n.g ? (
      <svg width="14" height="16" viewBox="0 0 14 16" aria-hidden="true">
        <path d="M6.500 0v3M6.500 13v3M12 8.500h2" stroke="#808080" strokeDasharray="1 1" />
        <path d={n.g === 'open' ? 'M2 6l4.500 4L11 6' : 'M4 4l4 4-4 4'} fill="none" stroke={n.g === 'open' ? '#404040' : '#a0a0a0'} strokeWidth="1.800" />
      </svg>
    ) : (
      <Twig width="36" height="16" viewBox="0 0 36 16" aria-hidden="true">
        <path d={`M6.500 0v16M25.500 0v${n.last ? 8 : 16}M26 8.500h10`} fill="none" stroke="#808080" strokeDasharray="1 1" />
      </Twig>
    )}
    <button><Icon name={n.i} /><Song>{n.t}</Song></button>
  </Node>
);

/* ---------- drawing canvas ---------- */

const Main = styled.main`
  flex: 1;
  min-width: 0;
  display: flex;
  flex-direction: column;
`;
const Canvas = styled.div`
  flex: none;
  height: 305px;
  background: #000;
  overflow: hidden;
`;
const Mark = styled.text`
  font: 15px "Noto Sans CJK SC", sans-serif;
  fill: #dcdcdc;
  text-anchor: middle;
`;
const bubbles: [number, number, string][] = [
  [286.5, 181, '4'], [620.5, 181, '5'], [788.5, 181, '6'], [955.5, 181, '7'], [963.5, 181, '2'], [1122.5, 181, '8'],
  [183, 223, 'B'], [183, 284, '0'], [183, 456, 'A1'], [1352, 203, 'A'], [1352, 223, '1'], [1208.5, 460, 'A'], [1352, 460, 'B'],
];
const Drawing = () => (
  <svg width="1196" height="305" viewBox="170 168 1196 305" role="img" aria-label="基础平面图">
    <g shapeRendering="crispEdges">
      <path d="M287 223h835v233H287z" fill="#b8b8b8" />
      <path d="M639 223h21v233h-21z" fill="#fff" />
      <path d="M640 223h19v233h-19z" fill="#f800f8" />
      <path d="M170 339.500h952M292.500 168v288M438.500 168v288M544.500 168v288M570.500 168v288M595.500 168v288M646.500 168v288M671.500 168v288M696.500 168v288" stroke="#7c0000" />
      <path d="M170 222.500h952M170 283.500h952M170 456.500h952M286.500 168v288M620.500 168v288M788.500 168v288M955.500 168v288M1122.500 168v288" stroke="#f00" />
      <path d="M1123 202.500h217M1198.500 168v34M1274.500 168v34M1208.500 223v228M1360.500 210v240M1209 299.500h157M1209 375.500h157" stroke="#008000" />
      <path d="M1188.500 192.500l21 21M1264.500 192.500l21 21M1198.500 309.500l21-21M1198.500 385.500l21-21M1350.500 309.500l21-21" stroke="#008000" fill="none" />
      <path d="M957 168l39 68 29-14 25-9 27-6 21-3.500 24-1M1202.500 168q6 28 6 54.500H1366M1356.500 168q4 20 4 54.500" stroke="#f00" fill="none" />
      <path d="M223 423v-39h-2l4-10 4 10h-2v39z" fill="#0f0" />
      <path d="M225 421h37v-3l12 5-12 5v-3h-37z" fill="#f00" />
    </g>
    {bubbles.map(([x, y, t]) => (
      <g key={`${x}-${y}`}>
        <circle cx={x} cy={y} r="12.500" fill="none" stroke="#008000" shapeRendering="crispEdges" />
        <Mark x={x} y={y + 5}>{t}</Mark>
      </g>
    ))}
    <Mark x="1286" y="279">3000</Mark>
    <text x="234" y="386" fill="#0f0" fontSize="13" fontFamily="Lato" fontWeight="300">Y</text>
    <text x="262" y="412" fill="#f00" fontSize="13" fontFamily="Lato" fontWeight="300">X</text>
  </svg>
);

/* ---------- snap bar ---------- */

const SpinBox = styled.span<{ $w: number }>`
  display: grid;
  grid-template-columns: 1fr 14px;
  width: ${(p) => p.$w}px;
  height: 22px;
  border: 1px solid #7a7a7a;
  color: #7a7a7a;
  background: #f4f4f4;
  > input { min-width: 0; width: 100%; text-align: right; padding-right: 3px; }
  > span { display: grid; place-items: center; }
`;
const Spin = ({ label, value, w }: { label: string; value: string; w: number }) => (
  <SpinBox $w={w}>
    <input type="text" aria-label={label} defaultValue={value} />
    <span><svg width="5" height="16" viewBox="0 0 5 16"><path d="M0 4h5L2.500 1zM0 12h5L2.500 15z" fill="#606060" /></svg></span>
  </SpinBox>
);
const Unit = styled.span`
  padding: 0 2px 0 1px;
  font-size: 13px;
  color: #7a7a7a;
`;
const TickLabel = styled.label`
  display: flex;
  align-items: center;
  gap: 8px;
  padding-right: 5px;
  > input {
    appearance: none;
    width: 11px;
    height: 11px;
    border: 1px solid #8a8a8a;
  }
`;

/* ---------- detail grid ---------- */

const Detail = styled.section`
  flex: 1;
  min-height: 0;
  display: grid;
  grid-template-columns: 13px minmax(0, 1fr);
`;
const DetailGrip = styled.div`
  padding: 3px 0 0 1px;
  margin-bottom: 2px;
  > button {
    display: block;
    width: 11px;
    height: 11px;
    margin-bottom: 2px;
  }
  > i {
    display: block;
    height: calc(100% - 14px);
    margin-left: 1px;
    background: radial-gradient(circle at 1px 1px, #c4c4c4 1px, transparent 2px) 0 0 / 5px 5px;
    width: 9px;
  }
`;
const DetailBody = styled.div`
  display: flex;
  flex-direction: column;
  min-width: 0;
`;
const DetailTools = styled(Panel)`
  flex: none;
  height: 30px;
  white-space: nowrap;
`;
const Summary = styled.span`
  padding-left: 5px;
`;
const SheetFrame = styled.div`
  flex: 1;
  min-height: 0;
  display: flex;
  flex-direction: column;
  margin: 0 1px 1px 0;
  padding-bottom: 1px;
  border: 1px solid #a0a0a0;
  background: #fff;
  overflow: hidden;
  > div:first-child { flex: 1; overflow: hidden; }
`;
const Sheet = styled.table`
  table-layout: fixed;
  width: 1210px;
  border-collapse: separate;
  border-spacing: 0;
  line-height: 16px;
  th, td {
    padding: 0;
    height: 19px;
    font-weight: 400;
    text-align: center;
    white-space: nowrap;
    overflow: hidden;
    border-right: 1px solid #c0c0c0;
    border-bottom: 1px solid #c0c0c0;
  }
  thead th { background: linear-gradient(#fff, #f0f0f0); }
  thead th.active { background: linear-gradient(#f9d9a0, #f3c166); color: #6a0d52; }
  tbody th { background: #fdd08a; color: #6a0d52; }
  tbody td.active { background: #d8e9f8; border-right-color: #000; }
`;
const columns: [string, number][] = [
  ['', 32], ['筋号', 74], ['直径(mm)', 56], ['级别', 36], ['图号', 33], ['图形', 201], ['计算公式', 166], ['公式描述', 156],
  ['长度(mm)', 61], ['根数', 137], ['搭接', 39], ['损耗(%)', 49], ['单重(kg)', 61], ['总重(kg)', 61], ['钢筋', 48],
];

/* ---------- status and task bars ---------- */

const StatusBar = styled.footer`
  display: flex;
  gap: 2px;
  flex: none;
  height: 22px;
  padding: 1px 0;
  white-space: nowrap;
`;
const StatusCell = styled.span<{ $w?: number }>`
  flex: ${(p) => (p.$w ? 'none' : 1)};
  width: ${(p) => (p.$w ? `${p.$w}px` : 'auto')};
  padding-left: 1px;
  line-height: 18px;
  border: 1px solid #d2d2d2;
  background: linear-gradient(#fdfdfd, #f0f0f0);
`;

const ImeBar = styled.div`
  position: absolute;
  right: 0;
  bottom: 38px;
  display: flex;
  align-items: center;
  gap: 6px;
  height: 27px;
  padding-right: 3px;
  color: #1a73c8;
  font: 700 14px/20px ${uiFont};
  background: linear-gradient(transparent 3px, #b9cbd9 3px 4px, #fbfdff 4px 25px, transparent 25px) 14px 0 no-repeat;
  > span { margin-left: 1px; margin-right: 2px; }
`;

const Badge = styled.div`
  position: absolute;
  top: -31px;
  left: 1091px;
  width: 48px;
  height: 50px;
  border: 3px solid #d5dcd8;
  border-radius: 50%;
  background: linear-gradient(#3fae55, #48c95f);
  box-shadow: inset 0 0 0 1px #2c8f50, 0 2px 4px #999;
  color: #fff;
  text-align: center;
  font: 700 11px/14px "DejaVu Sans", sans-serif;
  padding-top: 28px;
`;

const TaskBar = styled.footer`
  display: flex;
  flex: none;
  height: 40px;
  color: #fff;
  background: #020e12;
  white-space: nowrap;
`;
const TaskButton = styled.button<{ $w: number; $state?: 'running' | 'active' }>`
  flex: none;
  display: grid;
  place-items: center;
  width: ${(p) => p.$w}px;
  height: 40px;
  line-height: 18px;
  background: ${(p) => (p.$state === 'active' ? '#3b464b' : 'none')};
  ${(p) => p.$state && css`
    background-image: linear-gradient(#76b9ed, #76b9ed);
    background-repeat: no-repeat;
    background-position: 50% 100%;
    background-size: ${p.$state === 'active' ? '100%' : '34px'} 2px;
  `}
`;
const Start = styled(TaskButton)`
  background: #000;
`;
const Search = styled.label`
  flex: none;
  display: flex;
  align-items: center;
  gap: 6px;
  width: 344px;
  padding: 0 14px 0 8px;
  background: #333;
  > input { flex: 1; min-width: 0; font-size: 13px; line-height: 20px; color: #999; }
  > input::placeholder { color: #9b9b9b; opacity: 1; font-size: 14px; }
`;
const Tray = styled.div`
  display: flex;
  margin-left: auto;
  padding-right: 12px;
`;

const T = ({ children }: { children: ReactNode }) => <svg width="26" height="26" viewBox="0 0 26 26" aria-hidden="true">{children}</svg>;

const taskApps: { n: string; w: number; s?: 'running' | 'active'; a: ReactNode }[] = [
  { n: '任务视图', w: 48, a: <T><path d="M7.500 5.500h11v15h-11zM5 7.500H3.500v11H5M21 7.500h1.500v11H21" fill="none" stroke="#fff" strokeWidth="1.300" /></T> },
  { n: '四叶草', w: 52, a: <T><path d="M12.500 12.500V4Q4 1 4 7q0 5 8.500 5.500zM13.500 12.500Q13 2 20 3q5 2 1 8-3 2-7.500 1.500zM12.500 13.500Q3 12 3 18q1 6 7 4 3-2 2.500-8.500zM13.500 13.500v8q7 4 9-2 1-6-9-6z" fill="#f0f0f0" /></T> },
  { n: '浏览器一', w: 50, a: <T>{bigE('#f2f2f2')}<path d="M4 23Q0 16 13 6t10-2" fill="none" stroke="#f2f2f2" strokeWidth="1.500" /></T> },
  { n: '旋风', w: 50, a: <T><path d="M20 6Q6 2 6 13q1 9 9 8 5-2 4-7h-5M21 5Q10 7 10 13q0 5 4 5 3-1 2-4" fill="none" stroke="#d0d0d0" strokeWidth="1.500" /></T> },
  { n: '浏览器二', w: 50, a: <T>{bigE('#0a78d7')}</T> },
  { n: '浏览器三', w: 40, a: <T>{bigE('#4ab1ec')}<path d="M3 23Q-1 18 11 8t13-5q2 2-1 5" fill="none" stroke="#f3cf42" strokeWidth="2.200" /></T> },
  { n: '文件', w: 44, a: <T><path d="M3 4h8l2 3h10v14H3z" fill="#f8d775" /><path d="M3 9h20v3H3z" fill="#fff0b8" /><path d="M7 14h12v8h-4v-4h-4v4H7z" fill="#37a3dc" /></T> },
  { n: '广联达', w: 42, s: 'running', a: <T><path d="M22 2Q3 1 3 13q1 12 12 10 9-2 7-11h-8v4h4q-1 3-4 3-5 0-5-6 0-8 13-11z" fill="#1b9ae4" /></T> },
  { n: '安全浏览器', w: 42, s: 'running', a: <T><circle cx="13" cy="13" r="11" fill="#3fae3c" /><path d="M6 13a7 7 0 1 1 13.500 1H9q1 5 9 3" fill="none" stroke="#fff" strokeWidth="2.500" /><path d="M2 17Q10 6 23 8" stroke="#d7f3a5" fill="none" strokeWidth="2" /></T> },
  { n: '便签', w: 42, s: 'running', a: <T><rect x="1" y="1" width="24" height="24" rx="3" fill="#f39a1e" /><path d="M5 5h15v16H5z" fill="#fffbe8" /><path d="M8 9h6M8 12h5M8 15h4M7 18h3" stroke="#a86f28" /><path d="M10 19L21 5l3 2-11 13z" fill="#c9682b" stroke="#fff" /></T> },
  { n: '钢筋算量', w: 42, s: 'active', a: <T><rect x="1" y="1" width="24" height="24" rx="4" fill="#0b8df0" /><path d="M13 5v13q0 3 3 3t3-3M5 12v2q0 3 3 3h2M9 12h12.500q0-4-4-4M13 5q-3 0-3 3" fill="none" stroke="#fff" strokeWidth="2" /></T> },
  { n: '图集', w: 42, s: 'running', a: <T><rect x="1" y="1" width="24" height="24" rx="3" fill="#1781d4" /><path d="M4 9q5-2 9 0 4-2 9 0v11q-5-2-9 0-4-2-9 0z" fill="#f4f4f4" stroke="#8aa" /><path d="M13 9v11M6 12h5M6 15h5" stroke="#567" /><circle cx="16" cy="8" r="4" fill="#bfe4ff" stroke="#eee" strokeWidth="1.500" /></T> },
];

const SogouS = ({ size }: { size: number }) => (
  <svg width={size} height={size} viewBox="0 0 27 27" aria-hidden="true">
    <path d="M2 5L22 1l3 20-20 5z" fill="#ef4a1c" strokeLinejoin="round" stroke="#ef4a1c" strokeWidth="2" />
    <path d="M21 6Q8 4 8 9.500t11 5.500q3 6-12 6" fill="none" stroke="#fff" strokeWidth="3.500" />
  </svg>
);

const menus = ['文件(F)', '编辑(E)', '楼层(L)', '构件(N)', '绘图(D)', '修改(M)', '钢筋量(Q)', '视图(V)', '工具(T)', '云应用(Y)', 'BIM应用(I)', '在线服务(S)', '帮助(H)', '版本号(B)'];

export default function App() {
  return (
    <Page>
      <GlobalStyle />
      <TitleBar>
        <Icon name="app" />
        <Title><Mixed>{'广联达BIM钢筋算量软件 GGJ2013 - [C:\\Users\\Administrator.PC-20141127NRHM\\Desktop\\白龙村-2018-02-02-19-24-35(2666版).GGJ12]'}</Mixed></Title>
        <WindowButton aria-label="最小化"><svg width="10" height="10"><path d="M0 5.500h10" stroke="#000" /></svg></WindowButton>
        <WindowButton aria-label="还原"><svg width="10" height="10"><path d="M.5 2.500h7v7h-7zM2.500 2V.5h7v7H8" fill="none" stroke="#000" /></svg></WindowButton>
        <WindowButton aria-label="关闭窗口"><svg width="10" height="10"><path d="M0 0l10 10M10 0L0 10" stroke="#000" strokeWidth="1.200" /></svg></WindowButton>
      </TitleBar>

      <MenuBar>
        <MenuGroup>
          {menus.map((m) => <MenuItem key={m}><Mixed>{m}</Mixed></MenuItem>)}
          <MenuCluster><Tools items={[{ i: 'change', t: '新建变更', drop: true }]} /></MenuCluster>
          <MenuCluster><Tools items={[{ i: 'mascot', t: '广小二' }]} /></MenuCluster>
        </MenuGroup>
        <MenuPanel><NewsLink href="#news"><Song>为什么筏板XY方向布置..</Song></NewsLink></MenuPanel>
        <MenuPanel>
          <Tools items={[{ i: 'user', t: '13907298339', drop: true }]} />
          <Tool><Mixed>造价豆:0</Mixed></Tool>
          <Tools items={[{ i: 'bell' }]} />
          <MoreMark />
        </MenuPanel>
      </MenuBar>

      <CommandBar>
        <CommandPanel>
          <Tool $w={24} aria-label="新建"><Icon name="newFile" /></Tool>
          <Tool $w={22} aria-label="打开"><Icon name="open" /></Tool>
          <Tool $w={12} aria-label="打开选项"><Triangle /></Tool>
          <Tool $w={24} aria-label="保存"><Icon name="save" /></Tool>
          <Divider />
          <Tool $w={24} aria-label="撤销"><Icon name="undoFull" /></Tool>
          <Tool $w={12} aria-label="撤销选项"><Triangle /></Tool>
          <MoreMark />
        </CommandPanel>
        <CommandPanel>
          <Tools items={[{ i: 'define', t: '定义' }, { i: 'sigma', t: '汇总计算' }, { i: 'cloudCheck', t: '云检查' }, { i: 'levelTop', t: '平齐板顶', off: true }, { i: 'find', t: '查找图元' }, { i: 'glasses', t: '查看钢筋量' }, { i: 'batch', t: '批量选择' }]} />
          <MoreMark />
        </CommandPanel>
        <CommandPanel>
          <ViewPick><Icon name="plan" /><Dropdown label="视图维度" value="二维" w={43} /></ViewPick>
          <Tools items={[{ i: 'cube', t: '俯视', drop: true }, { i: 'orbit', t: '动态观察' }, { i: 'local3d', t: '局部三维' }, '|', { i: 'fullView', t: '全屏' }, { i: 'zoomer', t: '缩放', drop: true }, { i: 'pan', t: '平移', drop: true }, { i: 'screenRotate', t: '屏幕旋转', menu: true }, '|', { i: 'floors', t: '选择楼层' }]} />
          <MoreMark />
        </CommandPanel>
      </CommandBar>

      <Body>
        <Side>
          <SideHead>
            <span>模块导航栏</span>
            <button aria-label="固定"><Icon name="pin" size={12} /></button>
            <button aria-label="关闭导航"><Icon name="closeW" size={12} /></button>
          </SideHead>
          <SideTab>工程设置</SideTab>
          <SideTab>绘图输入</SideTab>
          <SideTools>
            <button aria-label="全部展开"><svg width="17" height="16" viewBox="0 0 17 16"><path d="M1 4.500h8M5 .5v8M8 10.500h8M12 6.500v8" stroke="#000" strokeWidth="3" /><path d="M2 4.500h6M5 1.500v6M9 10.500h6M12 7.500v6" stroke="#19a08c" /></svg></button>
            <button aria-label="全部折叠"><svg width="17" height="16" viewBox="0 0 17 16"><path d="M0 4.500h9M7 10.500h9" stroke="#000" strokeWidth="3" /><path d="M1 4.500h7M8 10.500h7" stroke="#19a08c" /></svg></button>
          </SideTools>
          <TreeFrame>
            <Tree>{nodes.map((n, k) => <TreeNode key={k} n={n} />)}</Tree>
            <VBar>
              <button aria-label="向上"><Chevron d={CH.u} /></button>
              <span />
              <i />
              <span />
              <button aria-label="向下"><Chevron d={CH.d} /></button>
            </VBar>
            <HBar $cols="18px 102px 1fr 17px">
              <button aria-label="向左"><Chevron d={CH.l} /></button><i /><span />
              <button aria-label="向右"><Chevron d={CH.r} /></button>
            </HBar>
          </TreeFrame>
          <SideTab>单构件输入</SideTab>
          <SideTab>报表预览</SideTab>
        </Side>

        <Main>
          <Strip $h={27}>
            <Panel>
              <Grip />
              <Tools items={[{ i: 'erase', t: '删除' }, '|', { i: 'copy', t: '复制' }, { i: 'mirror', t: '镜像' }, '|', { i: 'move', t: '移动' }, { i: 'rotate', t: '旋转' }, '|', { i: 'extend', t: '延伸', off: true }, { i: 'trim', t: '修剪', off: true }, '|', { i: 'breakIt', t: '打断', off: true }, { i: 'join', t: '合并' }, { i: 'split', t: '分割' }, '|', { i: 'align', t: '对齐', off: true, menu: true }, { i: 'offset', t: '偏移' }, { i: 'stretch', t: '拉伸' }, '|', { i: 'grip', t: '设置夹点' }]} />
            </Panel>
          </Strip>
          <Strip $h={28}>
            <Panel>
              <Grip />
              <Dropdown label="楼层" value="基础层" w={58} />
              <Dropdown label="构件类别" value="基础" w={70} />
              <Dropdown label="构件类型" value="集水坑" w={70} />
              <Dropdown label="构件名称" value="JSK-1" w={70} />
              <Divider />
              <Tools items={[{ i: 'property', t: '属性' }, { i: 'editBar', t: '编辑钢筋', on: true }, { i: 'list', t: '构件列表' }, { i: 'picker', t: '拾取构件' }]} />
            </Panel>
            <Panel>
              <Grip />
              <Tools items={[{ i: 'twoPoint', t: '两点' }, { i: 'parallel', t: '平行' }, { i: 'pointAngle', t: '点角', drop: true }, { i: 'threeAxis', t: '三点辅轴', drop: true }, { i: 'erase', t: '删除辅轴' }, { i: 'dimension', t: '尺寸标注', drop: true }]} />
            </Panel>
          </Strip>
          <Strip $h={29}>
            <Panel>
              <Grip />
              <Tools items={[{ i: 'cursor', t: '选择', on: true, drop: true }, '|', { i: 'point', t: '点' }, { i: 'rotatePoint', t: '旋转点' }, '|', { i: 'line', t: '直线', off: true }, { i: 'arc', t: '三点画弧', off: true, drop: true }]} />
              <Dropdown label="半径" value="" w={56} framed />
              <Tools items={[{ i: 'rect', t: '矩形', off: true }, '|', { i: 'adjustDir', t: '调整钢筋方向' }, { i: 'slope', t: '调整集水坑放坡' }]} />
            </Panel>
            <Panel><Grip /><Tool $w={24} aria-label="空白工具" /></Panel>
          </Strip>

          <Canvas><Drawing /></Canvas>

          <Strip $h={31}>
            <Panel>
              <Grip />
              <Tools items={[{ i: 'ortho', t: '正交' }, { i: 'osnap', t: '对象捕捉', on: true }, { i: 'dynInput', t: '动态输入' }]} />
            </Panel>
            <Panel>
              <Grip />
              <Tools items={[{ i: 'cross', t: '交点' }, { i: 'perp', t: '垂点', on: true }, { i: 'mid', t: '中点', on: true }, { i: 'vertex', t: '顶点' }, { i: 'coord', t: '坐标' }]} />
            </Panel>
            <Panel>
              <Grip />
              <Dropdown label="偏移方式" value="不偏移" w={58} />
              <Divider />
              <Unit>X=</Unit><Spin label="X 偏移" value="0" w={58} /><Unit>mm</Unit>
              <Unit>Y=</Unit><Spin label="Y 偏移" value="0" w={58} /><Unit>mm</Unit>
              <Divider />
              <TickLabel><input type="checkbox" />旋转</TickLabel>
              <Spin label="旋转角度" value="0.000" w={68} /><Unit>°</Unit>
            </Panel>
          </Strip>

          <Detail>
            <DetailGrip>
              <button aria-label="关闭面板"><svg width="11" height="11" viewBox="0 0 11 11"><path d="M.5.5h10v10H.5z" fill="#fff" stroke="#445" /><path d="M2 2l7 7M9 2L2 9" stroke="#223" strokeWidth="1.500" /><path d="M1 1h9" stroke="#a33" /></svg></button>
              <i />
            </DetailGrip>
            <DetailBody>
              <DetailTools>
                {['first', 'prev', 'next', 'last'].map((n) => <Tool key={n} $w={23} disabled aria-label={n}><Icon name={n} /></Tool>)}
                <Divider />
                {['up', 'down'].map((n) => <Tool key={n} $w={23} disabled aria-label={n}><Icon name={n} /></Tool>)}
                <Divider />
                <Tools items={[{ i: 'insert', t: '插入', off: true }, { i: 'removeRow', t: '删除', off: true }, { i: 'scale', t: '缩尺配筋', off: true }, { i: 'info', t: '钢筋信息', off: true }, { i: 'gallery', t: '钢筋图库', off: true }, { i: 'other', t: '其他', menu: true }, { t: '关闭' }, '|']} />
                <Summary><Mixed>单构件钢筋总重(kg) : 0</Mixed></Summary>
              </DetailTools>
              <SheetFrame>
                <div>
                  <Sheet>
                    <colgroup>{columns.map(([t, w], k) => <col key={k} width={w} />)}</colgroup>
                    <thead>
                      <tr>{columns.map(([t], k) => <th key={k} scope="col" className={k === 1 ? 'active' : undefined}><Song>{t}</Song></th>)}</tr>
                    </thead>
                    <tbody>
                      <tr>
                        <th scope="row"><Song>1*</Song></th>
                        {columns.slice(1).map((c, k) => <td key={k} className={k === 0 ? 'active' : undefined} />)}
                      </tr>
                    </tbody>
                  </Sheet>
                </div>
                <HBar $cols="17px 64.500% 1fr 17px">
                  <button aria-label="表格向左"><Chevron d={CH.l} /></button><i /><span />
                  <button aria-label="表格向右"><Chevron d={CH.r} /></button>
                </HBar>
              </SheetFrame>
            </DetailBody>
          </Detail>
        </Main>
      </Body>

      <StatusBar>
        <StatusCell $w={148}><Song>X=277640 Y=6570</Song></StatusCell>
        <StatusCell $w={78}><Song>层高:2.15m</Song></StatusCell>
        <StatusCell $w={98}><Song>底标高:-2.2m</Song></StatusCell>
        <StatusCell $w={48}><Song>0</Song></StatusCell>
        <StatusCell>按鼠标左键指定第一个角点，或拾取构件图元</StatusCell>
      </StatusBar>

      <TaskBar>
        <Start $w={48} aria-label="开始"><svg width="16" height="16" viewBox="0 0 16 16"><path d="M0 2.500l7-1v6H0zM8 1.300L16 0v7.500H8zM0 8.500h7v6l-7-1zM8 8.500h8V16l-8-1.300z" fill="#fff" /></svg></Start>
        <Search>
          <svg width="22" height="22" viewBox="0 0 22 22"><circle cx="11" cy="11" r="9" fill="none" stroke="#fff" strokeWidth="2.500" /></svg>
          <input type="search" aria-label="搜索" placeholder="在这里输入你要搜索的内容" />
          <svg width="14" height="20" viewBox="0 0 14 20"><path d="M4.500 2.500q2.500-3 5 0v8q-2.500 3-5 0zM2 9v3q1 4 5 4t5-4V9M7 16v3M4 19h6" fill="none" stroke="#aaa" strokeWidth="1.200" /></svg>
        </Search>
        {taskApps.map((a) => <TaskButton key={a.n} $w={a.w} $state={a.s} aria-label={a.n}>{a.a}</TaskButton>)}
        <Tray>
          <TaskButton $w={40}>链接</TaskButton>
          <TaskButton $w={70}><span>26%<br />CPU使用</span></TaskButton>
          <TaskButton $w={26} aria-label="显示隐藏图标"><svg width="12" height="8"><path d="M1 7l5-5 5 5" fill="none" stroke="#fff" strokeWidth="1.300" /></svg></TaskButton>
          <TaskButton $w={24} aria-label="电源"><svg width="16" height="14" viewBox="0 0 16 14"><path d="M4.500 5.500h10v6h-10zM2.500 0v3M5.500 0v3M1 3.500h6M4 4v5" fill="none" stroke="#fff" strokeWidth="1.200" /><path d="M6 7h7v3H6z" fill="#fff" /></svg></TaskButton>
          <TaskButton $w={24} aria-label="网络"><svg width="14" height="14" viewBox="0 0 14 14"><path d="M1 13Q1 2 13 1M4.500 13Q5 6 13 4.500M8 13q0-4 5-5" fill="none" stroke="#ddd" /><circle cx="12" cy="12" r="1.500" fill="#fff" /></svg></TaskButton>
          <TaskButton $w={22} aria-label="音量"><svg width="16" height="14" viewBox="0 0 16 14"><path d="M1 5h3l3-3v10L4 9H1zM9.500 5q1.500 2 0 4M11.500 3q3 4 0 8M13.500 1.500q4 5.500 0 11" fill="none" stroke="#fff" /></svg></TaskButton>
          <TaskButton $w={34} aria-label="触摸键盘"><svg width="22" height="14" viewBox="0 0 22 14"><path d="M.5.5h21v13H.5zM6 10.500h10" fill="none" stroke="#fff" /><path d="M3 4.500h17M3 7.500h17" stroke="#fff" strokeDasharray="2 1" /></svg></TaskButton>
          <TaskButton $w={24}>中</TaskButton>
          <TaskButton $w={32} aria-label="搜狗输入法"><SogouS size={16} /></TaskButton>
          <TaskButton $w={76}><span><Mixed>20:49</Mixed><br /><Mixed>2018/5/19</Mixed></span></TaskButton>
          <TaskButton $w={40} aria-label="通知"><svg width="16" height="17" viewBox="0 0 16 17"><path d="M.5.5h15v11.500H11v3.500L7.500 12H.5z" fill="none" stroke="#fff" strokeWidth="1.200" /></svg></TaskButton>
        </Tray>
      </TaskBar>

      <Badge>69</Badge>
      <ImeBar>
        <SogouS size={27} />
        <span>英</span>
        <svg width="12" height="16" viewBox="0 0 12 16"><circle cx="3" cy="6" r="2" fill="#1a73c8" /><path d="M8 9h3q0 4-3 5z" fill="#1a73c8" /></svg>
        <svg width="17" height="17" viewBox="0 0 17 17"><circle cx="8.500" cy="8.500" r="7.200" fill="none" stroke="#1a73c8" strokeWidth="1.500" /><path d="M6 5v3M11 5v3M4.500 9.500q4 5 8 0" fill="none" stroke="#1a73c8" strokeWidth="1.500" /></svg>
        <svg width="14" height="17" viewBox="0 0 14 17"><rect x="4" y="1" width="6" height="9" rx="3" fill="#1a73c8" /><path d="M2 7q0 5 5 5t5-5M7 12v4M4 15.500h6" fill="none" stroke="#1a73c8" strokeWidth="1.500" /></svg>
        <svg width="18" height="14" viewBox="0 0 18 14"><path d="M1 1h15v11H1z" fill="none" stroke="#1a73c8" strokeWidth="1.600" /><path d="M3 4.500h12M3 7h12" stroke="#1a73c8" strokeWidth="1.500" strokeDasharray="2 1" /><path d="M5 9.700h8" stroke="#1a73c8" /></svg>
        <svg width="18" height="17" viewBox="0 0 18 17"><circle cx="7" cy="4" r="3" fill="#b8c4d4" /><path d="M1 14q0-7 6-7 3 0 4 2H7v5z" fill="#b8c4d4" /><path d="M8.500 9.500h8v6h-8zM12.500 10v5M9 12.500h7" fill="none" stroke="#b8c4d4" /></svg>
        <svg width="16" height="16" viewBox="0 0 16 16"><path d="M5 1q3 3 6 0l5 3-2 4-2-1v8H4V7L2 8 0 4z" fill="#1a73c8" /></svg>
        <svg width="16" height="16" viewBox="0 0 16 16"><path d="M2 14l7-7" stroke="#1a73c8" strokeWidth="3.500" /><path d="M15 5q0 4-5 4-3-1-3-4 1-4 5-4l-2 3 2 2z" fill="#1a73c8" /></svg>
      </ImeBar>
    </Page>
  );
}
